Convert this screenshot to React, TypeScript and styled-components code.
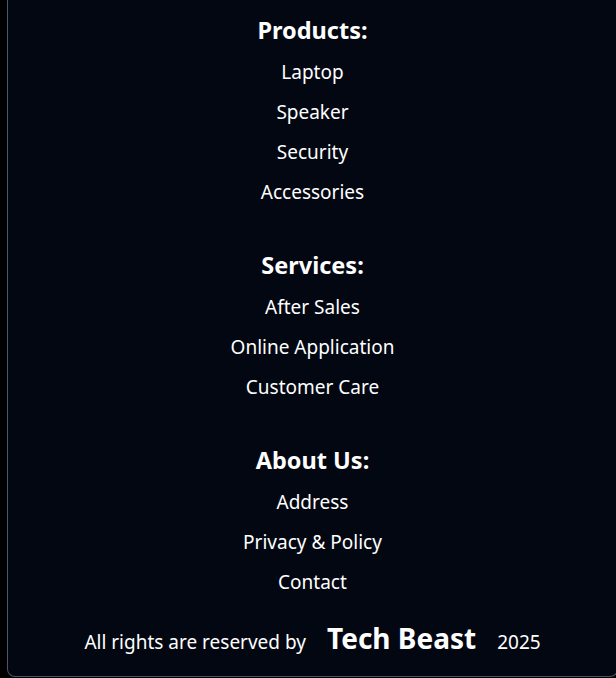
import React from "react";
import styled, { createGlobalStyle } from "styled-components";

const Global = createGlobalStyle`
  html, body {
    margin: 0;
    padding: 0;
    background: #000;
    overflow: hidden;
  }
  body {
    font-family: "Noto Sans", "Open Sans", sans-serif;
  }
`;

const Card = styled.footer`
  box-sizing: border-box;
  margin-left: 7px;
  width: 611px;
  height: 677px;
  background: #030712;
  border: 1px solid #4b5563;
  border-top: none;
  border-radius: 0 0 8px 8px;
  color: #fff;
  display: flex;
  flex-direction: column;
  align-items: center;
  padding-top: 14px;
`;

const Section = styled.section`
  display: flex;
  flex-direction: column;
  align-items: center;
  margin-bottom: 37px;
  &:last-of-type {
    margin-bottom: 17px;
  }
`;

const Heading = styled.h3`
  margin: 0 0 6px;
  font-size: 23.5px;
  line-height: 32px;
  font-weight: 700;
`;

const List = styled.ul`
  list-style: none;
  margin: 0;
  padding: 0;
  display: flex;
  flex-direction: column;
  align-items: center;
`;

const Item = styled.li`
  font-size: 19px;
  line-height: 40px;
  height: 40px;
`;

const Bottom = styled.div`
  display: flex;
  align-items: baseline;
  justify-content: center;
  gap: 21px;
  height: 40px;
  font-size: 19px;
`;

const Brand = styled.span`
  font-size: 28px;
  font-weight: 700;
`;

const sections = [
  { title: "Products:", items: ["Laptop", "Speaker", "Security", "Accessories"] },
  { title: "Services:", items: ["After Sales", "Online Application", "Customer Care"] },
  { title: "About Us:", items: ["Address", "Privacy & Policy", "Contact"] },
];

export default function App() {
  return (
    <>
      <Global />
      <Card>
        {sections.map((s) => (
          <Section key={s.title}>
            <Heading>{s.title}</Heading>
            <List>
              {s.items.map((i) => (
                <Item key={i}>{i}</Item>
              ))}
            </List>
          </Section>
        ))}
        <Bottom>
          <span>All rights are reserved by</span>
          <Brand>Tech Beast</Brand>
          <span>2025</span>
        </Bottom>
      </Card>
    </>
  );
}
